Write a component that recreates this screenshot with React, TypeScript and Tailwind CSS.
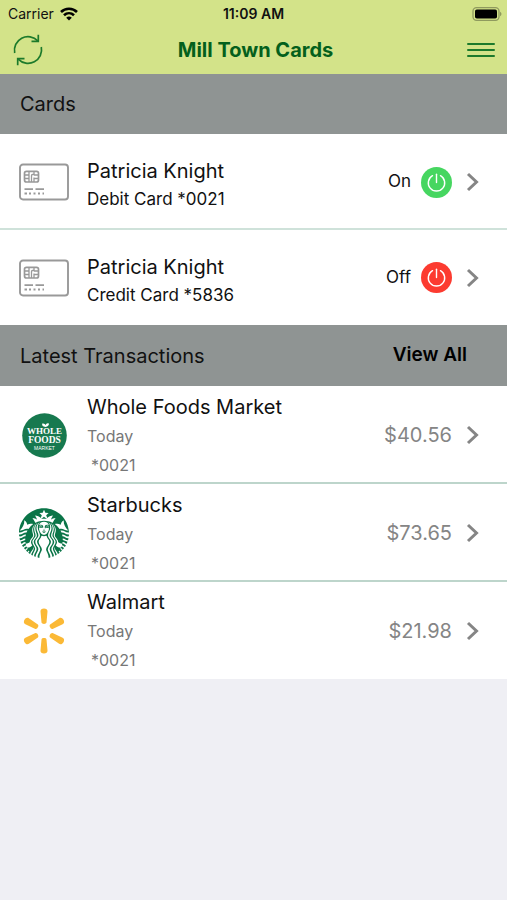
import { SiStarbucks } from "react-icons/si";

function WifiIcon() {
    return (
        <svg width="18" height="14" viewBox="0 0 18 14" fill="none" stroke="#000" strokeWidth="2.6" aria-hidden="true">
            <path d="M1 5C5.400 .6 12.600 .6 17 5" />
            <path d="M4 8.300C6.900 5.500 11.100 5.500 14 8.300" />
            <path d="M6.200 10.700Q9 8.200 11.800 10.700L9 13.500Z" fill="#000" stroke="none" />
        </svg>
    );
}

function BatteryIcon() {
    return (
        <svg width="31" height="14" viewBox="0 0 31 14" aria-hidden="true">
            <rect x="1" y="0.700" width="26" height="12.600" rx="3.500" fill="none" stroke="#8f9a5e" strokeWidth="1.300" />
            <rect x="3" y="2.500" width="22" height="9" rx="1.800" fill="#000" />
            <path d="M28 4.800c2 .8 2 3.600 0 4.400z" fill="#8f9a5e" />
        </svg>
    );
}

function RefreshIcon() {
    return (
        <svg width="32" height="32" viewBox="0 0 32 32" fill="none" stroke="#1c7a2b" strokeWidth="1.700" aria-hidden="true">
            <path d="M2.700 19A13.600 13.600 0 0 1 25.800 6.800" />
            <path d="M26.300 0.800V7.300H19.500" />
            <path d="M29.300 13A13.600 13.600 0 0 1 6.200 25.200" />
            <path d="M5.700 31.200V24.700H12.500" />
        </svg>
    );
}

function MenuIcon() {
    return (
        <svg width="28" height="16" viewBox="0 0 28 16" fill="none" stroke="#1c7a2b" strokeWidth="2" strokeLinecap="round" aria-hidden="true">
            <path d="M1 2H27M1 8H27M1 14H27" />
        </svg>
    );
}

function Chevron() {
    return (
        <svg className="shrink-0" width="14" height="20" viewBox="0 0 14 20" fill="none" stroke="#858585" strokeWidth="3" aria-hidden="true">
            <path d="M2 2L10.500 10L2 18" />
        </svg>
    );
}

function CardIcon() {
    return (
        <svg width="50" height="38" viewBox="0 0 50 38" fill="none" stroke="#999" aria-hidden="true">
            <rect x="1" y="1.500" width="48" height="35" rx="3" strokeWidth="1.900" />
            <rect x="5.500" y="8.300" width="14" height="10.700" rx="2" strokeWidth="1.700" />
            <path d="M10 8.500V19M5.500 12H10M5.500 15.500H10M15 19V14.500M12.500 19V12.500Q12.500 11.500 13.500 11.500H15V8.500M15 12H19.500M15 15.500H19.500" strokeWidth="1.300" />
            <path d="M5.500 26.200H14M16.500 26.200H25" strokeWidth="1.800" />
            <path d="M5.500 30.500H8M10 30.500H12M14.500 30.500H16.500M19 30.500H21M23.500 30.500H25" strokeWidth="1.800" />
        </svg>
    );
}

function PowerIcon() {
    return (
        <svg width="31" height="31" viewBox="0 0 31 31" fill="none" stroke="#fff" strokeWidth="1.400" strokeLinecap="round" aria-hidden="true">
            <path d="M11.500 8.700A8.200 8.200 0 1 0 19.500 8.700" />
            <path d="M15.500 7.200V15.500" />
        </svg>
    );
}

function WholeFoodsLogo() {
    return (
        <svg width="45" height="45" viewBox="0 0 45 45" aria-hidden="true">
            <circle cx="22.500" cy="22.500" r="22.300" fill="#17794f" />
            <g fill="#fff" textAnchor="middle" fontFamily="Liberation Serif, serif" fontWeight="700">
                <text x="22.500" y="20.500" fontSize="9">WHOLE</text>
                <text x="22.500" y="29.500" fontSize="9.500">FOODS</text>
                <text x="22.500" y="36.500" fontSize="5" fontFamily="Liberation Sans, sans-serif" fontWeight="400">MARKET</text>
            </g>
            <path d="M23.500 14Q19.500 13.500 20.200 10.500Q23 10 23.500 12Q24.500 9.500 27 10.500Q27 13.300 23.500 14Z" fill="#fff" />
        </svg>
    );
}

function WalmartLogo() {
    return (
        <svg width="50" height="50" viewBox="0 0 50 50" fill="#fbb936" aria-hidden="true">
            {[0, 60, 120, 180, 240, 300].map((angle) => (
                <path
                    key={angle}
                    transform={`rotate(${angle} 25 25)`}
                    d="M25 2.500C27.100 2.500 28.700 3.700 28.500 5.500L27.500 16.500C27.200 18.400 22.800 18.400 22.500 16.500L21.500 5.500C21.300 3.700 22.900 2.500 25 2.500Z"
                />
            ))}
        </svg>
    );
}

const cards = [
    { type: "Debit Card", number: "*0021", status: "On", color: "bg-[#46d660]" },
    { type: "Credit Card", number: "*5836", status: "Off", color: "bg-[#fc3b30]" },
];

const transactions = [
    { name: "Whole Foods Market", amount: "$40.56", logo: <WholeFoodsLogo /> },
    { name: "Starbucks", amount: "$73.65", logo: <SiStarbucks size={50} color="#0b7548" aria-hidden="true" /> },
    { name: "Walmart", amount: "$21.98", logo: <WalmartLogo /> },
];

export default function App() {
    return (
        <div className="min-h-screen bg-[#efeff4] font-[Inter,sans-serif] text-[#111]">
            <header className="bg-[#d3e389]">
                <div className="grid h-7 grid-cols-3 items-center px-2 text-sm">
                    <div className="flex items-center gap-1.5">
                        <span>Carrier</span>
                        <WifiIcon />
                    </div>
                    <span className="text-center font-semibold">11:09 AM</span>
                    <div className="-mr-1 flex justify-end">
                        <BatteryIcon />
                    </div>
                </div>
                <div className="flex h-[46px] items-center justify-between px-3 pb-0.5">
                    <button type="button" aria-label="Refresh" className="cursor-pointer">
                        <RefreshIcon />
                    </button>
                    <h1 className="text-xl font-bold text-[#04601c]">Mill Town Cards</h1>
                    <button type="button" aria-label="Menu" className="cursor-pointer">
                        <MenuIcon />
                    </button>
                </div>
            </header>

            <main>
                <h2 className="flex h-[60px] items-center bg-[#8f9493] px-5 text-xl">Cards</h2>
                <ul className="divide-y-2 divide-[#cfe2da] bg-white">
                    {cards.map((card) => (
                        <li key={card.number} className="flex h-24 items-center pl-[19px] pr-[27px] pt-0.5 last:h-[95px] last:pt-0">
                            <CardIcon />
                            <div className="ml-[18px] flex-1 pt-1.5">
                                <p className="text-xl leading-7">Patricia Knight</p>
                                <p className="text-[17px] leading-7">{card.type} {card.number}</p>
                            </div>
                            <span className="text-[17px]">{card.status}</span>
                            <button type="button" aria-label={`${card.type} power`} className={`ml-2.5 mr-3.5 cursor-pointer rounded-full ${card.color}`}>
                                <PowerIcon />
                            </button>
                            <Chevron />
                        </li>
                    ))}
                </ul>

                <div className="flex h-[61px] items-center justify-between bg-[#8f9493] pl-5 pr-10">
                    <h2 className="text-xl">Latest Transactions</h2>
                    <a href="#transactions" className="text-[19px] font-semibold text-black">View All</a>
                </div>
                <ul id="transactions" className="divide-y-2 divide-[#bdd5cb] bg-white">
                    {transactions.map((item) => (
                        <li key={item.name} className="flex h-[98px] items-center pl-[19px] pr-[27px] pt-0.5 last:h-[97px] last:pt-0">
                            <div className="flex w-[50px] justify-center">{item.logo}</div>
                            <div className="ml-[18px] flex-1 pt-0.5 text-base leading-[29px] text-[#777]">
                                <p className="text-xl leading-[29px] text-[#111]">{item.name}</p>
                                <p>Today</p>
                                <p className="pl-1">*0021</p>
                            </div>
                            <span className="mr-3.5 text-xl text-[#858585]">{item.amount}</span>
                            <Chevron />
                        </li>
                    ))}
                </ul>
            </main>
        </div>
    );
}
